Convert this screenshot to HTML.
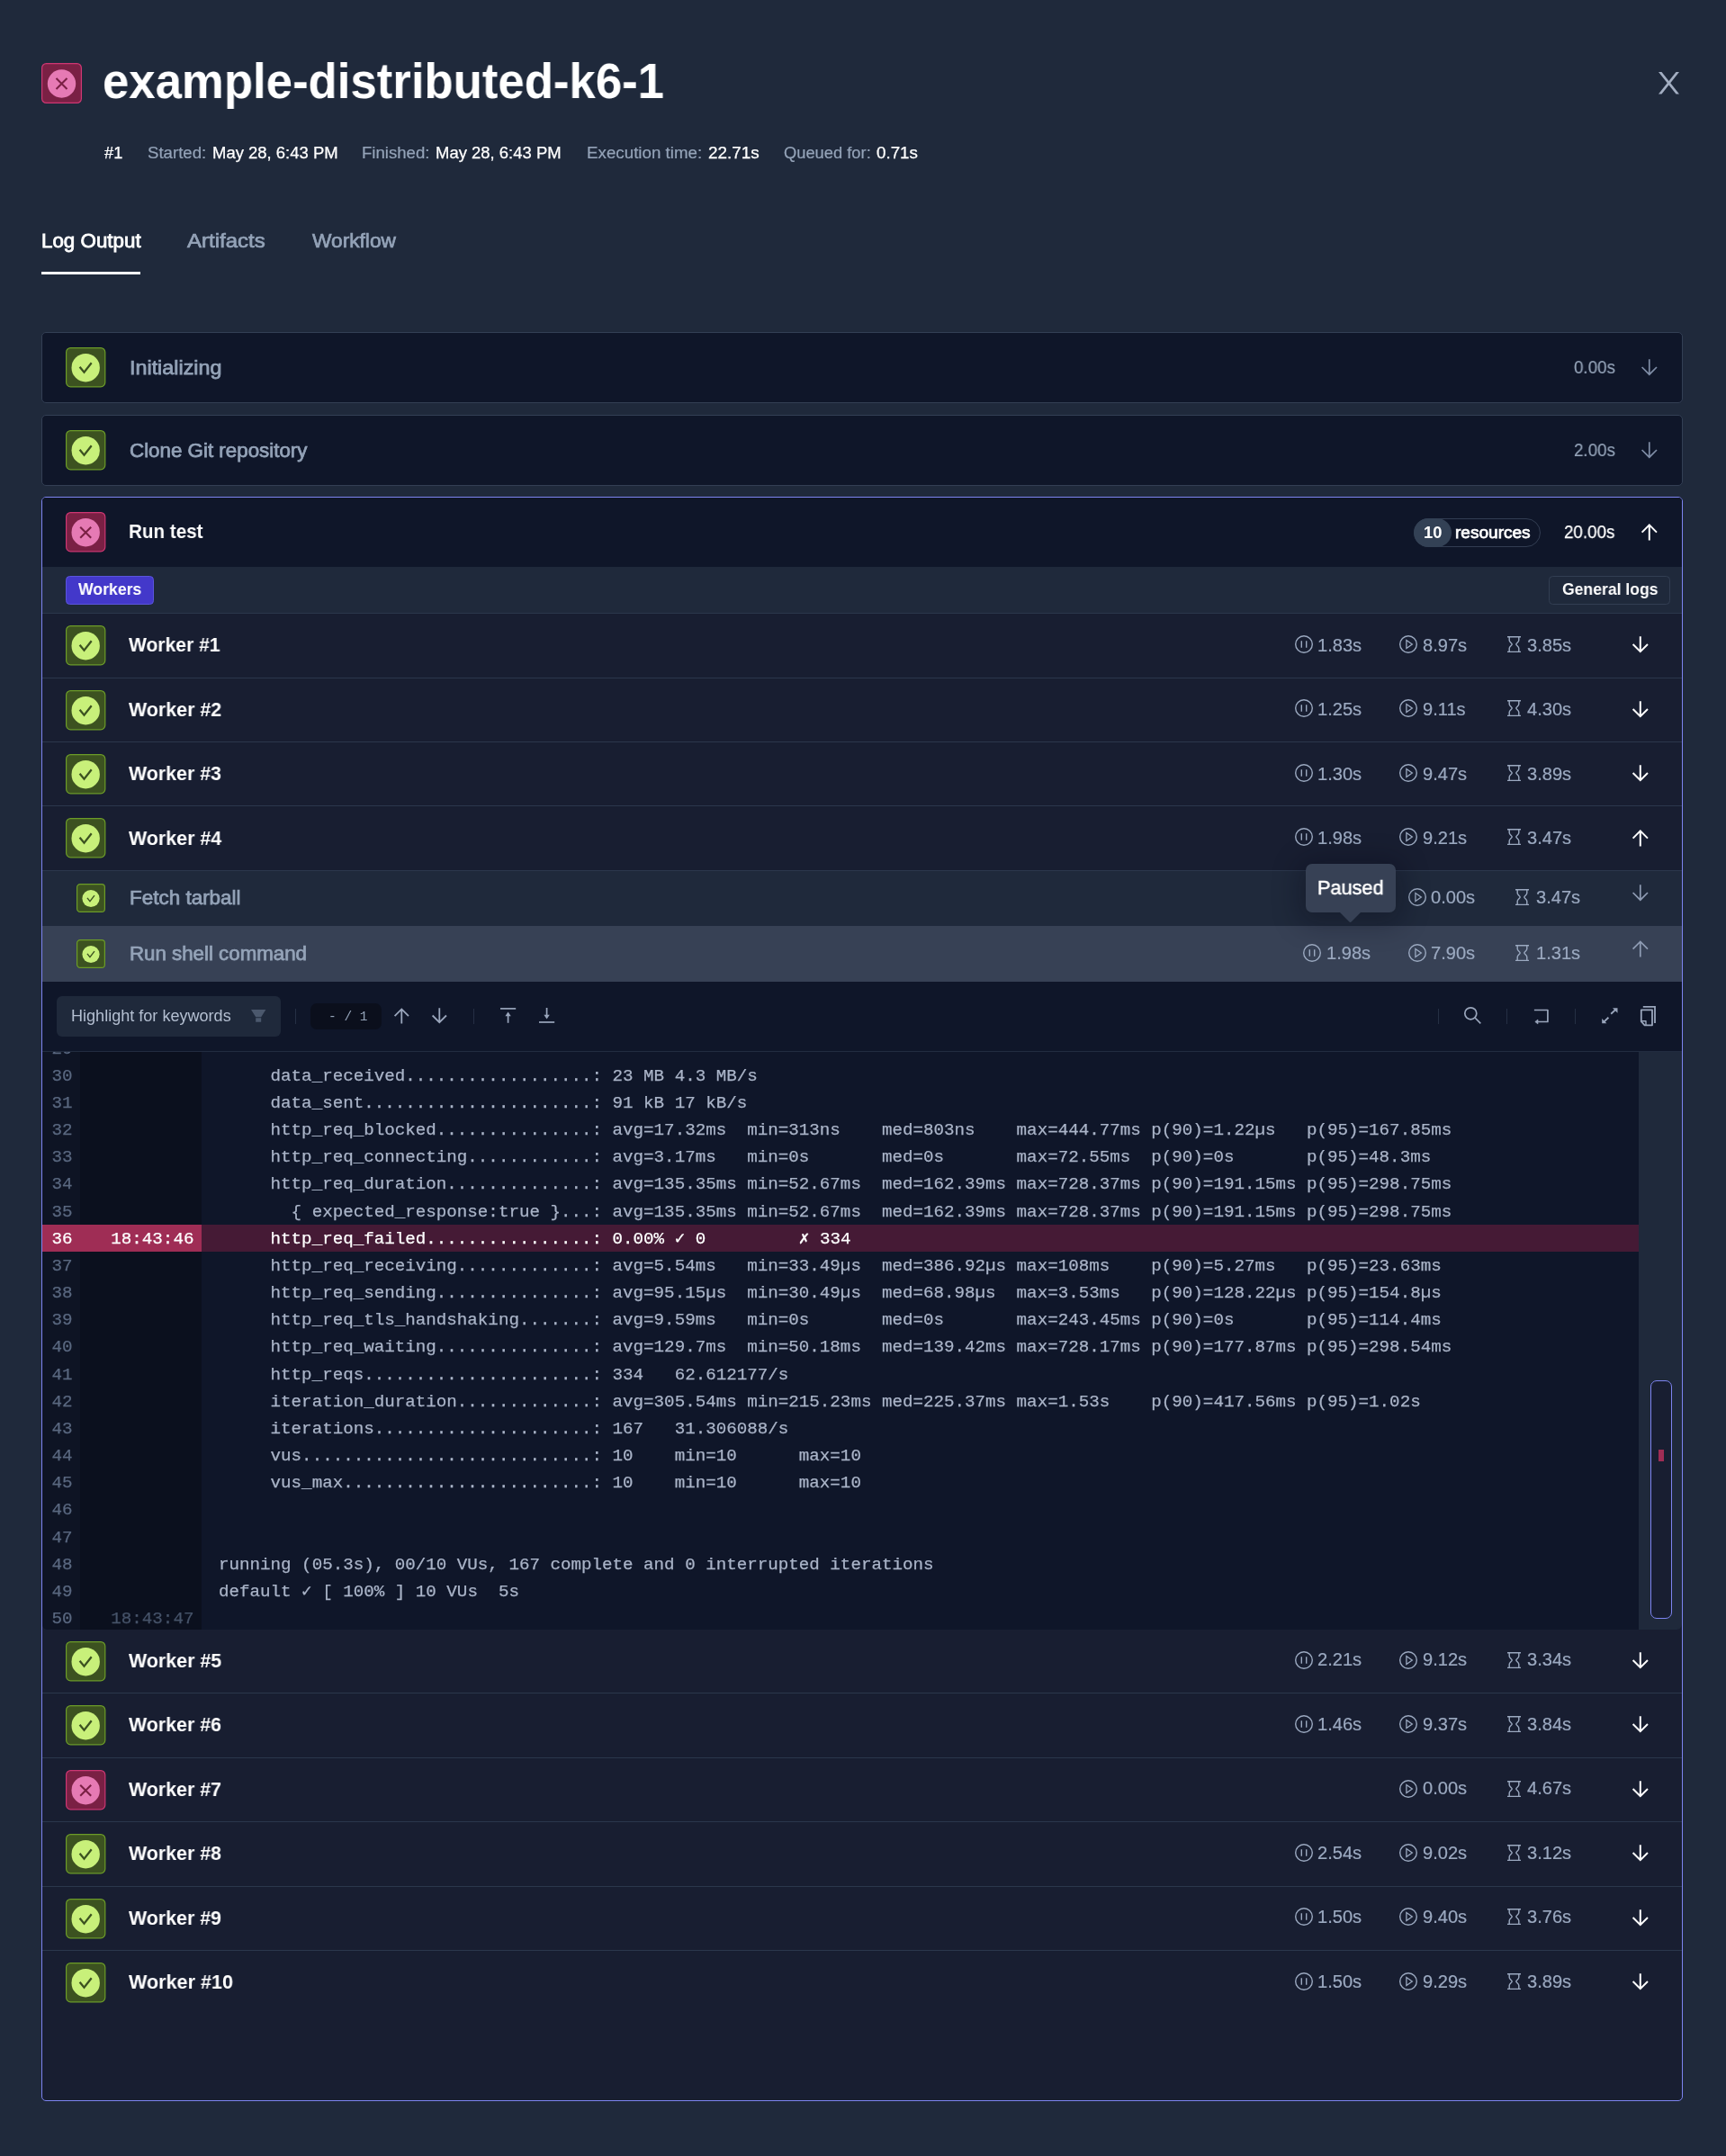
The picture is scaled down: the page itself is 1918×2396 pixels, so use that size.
<!DOCTYPE html>
<html lang="en"><head><meta charset="utf-8"><title>example-distributed-k6-1</title>
<style>
*{box-sizing:border-box;margin:0;padding:0}
html,body{width:1918px;height:2396px;overflow:hidden;background:#1f293b}
body{position:relative;font-family:"Liberation Sans",sans-serif;color:#fff;-webkit-font-smoothing:antialiased}
.abs{position:absolute}
.t{position:absolute;white-space:pre;line-height:30px;height:30px;will-change:transform}
.title{font-weight:700;line-height:64px;height:64px;color:#fff}
.meta{color:#fff;-webkit-text-stroke:0.25px #fff}
.meta.ml{color:#94a3b8;-webkit-text-stroke:0.2px #94a3b8}
.tab{color:#94a3b8;-webkit-text-stroke:0.7px #94a3b8}
.tab.on{color:#fff;-webkit-text-stroke:0.8px #fff}
.card{position:absolute;left:46px;width:1824px;border:1.2px solid #333f54;border-radius:5px;background:#0f1629;overflow:hidden}
.card.act{border-color:#7d84f0}
.step{color:#94a3b8;-webkit-text-stroke:0.75px #94a3b8}
.stepw{font-weight:700;color:#fff}
.dur{color:#94a3b8;-webkit-text-stroke:0.2px #94a3b8}
.durw{color:#fff;-webkit-text-stroke:0.25px #fff}
.stat{color:#9ba9c0;-webkit-text-stroke:0.2px #9ba9c0}
.row{position:absolute;left:47px;width:1822px;background:#181e31}
.sep{position:absolute;left:47px;width:1822px;height:1px;background:#2b374c}
.ico{position:absolute;border-radius:5px;border:1.2px solid}
.ico.ok{background:#3c5220;border-color:#6c9c28}
.ico.bad{background:#7a2044;border-color:#cd3773}
.ico svg{position:absolute;left:0;top:0;width:100%;height:100%;display:block}
svg{display:block;overflow:visible}
.mono{font-family:"Liberation Mono","DejaVu Sans Mono",monospace}
.ln{will-change:transform;position:absolute;left:0;height:30.1px;line-height:30.1px;font-size:19.2px;white-space:pre;color:#aab4c8;-webkit-text-stroke:0.25px}
.num{position:absolute;left:10.6px;color:#5a6880}
.ts{position:absolute;left:76.3px;color:#465369}
.tx{position:absolute;left:196.0px}

.pill10{font-weight:700;color:#fff}
.pillr{color:#fff;-webkit-text-stroke:0.75px #fff}
.tagw{font-weight:700;color:#fff}
.tip{color:#fff;-webkit-text-stroke:0.5px #fff}
.hl{color:#b4bfd1}
.cnt{font-size:14.5px;color:#94a3b8}
</style></head>
<body>
<svg class="abs" style="left:46px;top:69.80px;width:45px;height:45px" viewBox="0 0 45 45"><rect x="0.6" y="0.6" width="43.80" height="43.80" rx="4.86" fill="#7a2044" stroke="#cd3773" stroke-width="1.2"/><circle cx="22.50" cy="23.00" r="15.70" fill="#e67ab4"/><path d="M16.50 17.00 L28.50 29.00 M28.50 17.00 L16.50 29.00" fill="none" stroke="#7a2044" stroke-width="2.10"/></svg>
<div class="t title" style="left:114.40px;top:58.30px;font-size:55.5px;transform-origin:0 50%;transform:scaleX(0.9499);">example-distributed-k6-1</div>
<svg class="abs" style="left:1842.8px;top:79.8px;width:23px;height:24.4px" viewBox="0 0 23 24.4"><path d="M0 0 H3.5 L23 24.4 H19.5 Z" fill="#a3aec2"/><path d="M23 0 H19.5 L0 24.4 H3.5 Z" fill="#a3aec2"/></svg>
<div class="t meta" style="left:115.70px;top:155.10px;font-size:17.78px;transform-origin:0 50%;transform:scaleX(1.0303);">#1</div>
<div class="t meta ml" style="left:163.70px;top:155.10px;font-size:17.78px;transform-origin:0 50%;transform:scaleX(1.0482);">Started:</div>
<div class="t meta" style="left:235.50px;top:155.10px;font-size:17.78px;transform-origin:0 50%;transform:scaleX(1.0394);">May 28, 6:43 PM</div>
<div class="t meta ml" style="left:402.40px;top:155.10px;font-size:17.78px;transform-origin:0 50%;transform:scaleX(1.0457);">Finished:</div>
<div class="t meta" style="left:484.40px;top:155.10px;font-size:17.78px;transform-origin:0 50%;transform:scaleX(1.0394);">May 28, 6:43 PM</div>
<div class="t meta ml" style="left:651.80px;top:155.10px;font-size:17.78px;transform-origin:0 50%;transform:scaleX(1.0559);">Execution time:</div>
<div class="t meta" style="left:786.90px;top:155.10px;font-size:17.78px;transform-origin:0 50%;transform:scaleX(1.0655);">22.71s</div>
<div class="t meta ml" style="left:870.80px;top:155.10px;font-size:17.78px;transform-origin:0 50%;transform:scaleX(1.0309);">Queued for:</div>
<div class="t meta" style="left:974.20px;top:155.10px;font-size:17.78px;transform-origin:0 50%;transform:scaleX(1.0575);">0.71s</div>
<div class="t tab on" style="left:46.20px;top:253.30px;font-size:22.2px;transform-origin:0 50%;transform:scaleX(1.0073);">Log Output</div>
<div class="t tab" style="left:208.30px;top:253.30px;font-size:22.2px;transform-origin:0 50%;transform:scaleX(1.0823);">Artifacts</div>
<div class="t tab" style="left:347.40px;top:253.30px;font-size:22.2px;transform-origin:0 50%;transform:scaleX(1.0231);">Workflow</div>
<div class="abs" style="left:46px;top:301.6px;width:110.3px;height:3.4px;background:#fff"></div>
<div class="card" style="top:369px;height:78.6px"></div>
<svg class="abs" style="left:73px;top:386.20px;width:44.4px;height:44.4px" viewBox="0 0 44.4 44.4"><rect x="0.6" y="0.6" width="43.20" height="43.20" rx="4.80" fill="#3c5220" stroke="#6c9c28" stroke-width="1.2"/><circle cx="22.20" cy="22.70" r="15.70" fill="#c8f07a"/><path d="M15.60 21.70 L20.50 27.80 L28.70 17.20" fill="none" stroke="#3c5220" stroke-width="2.25"/></svg>
<div class="t step" style="left:143.50px;top:393.50px;font-size:22.2px;transform-origin:0 50%;transform:scaleX(1.0513);">Initializing</div>
<div class="t dur" style="left:1749.00px;top:393.20px;font-size:20px;transform-origin:0 50%;transform:scaleX(0.9387);">0.00s</div>
<svg class="abs" style="left:1823.60px;top:398.60px;width:17.6px;height:18.6px" viewBox="0 0 17.6 18.6"><path d="M8.8 0.2 V17.200000000000003 M0.60 9.00 L8.8 17.200000000000003 L17.00 9.00" fill="none" stroke="#7f8da6" stroke-width="1.7"/></svg>
<div class="card" style="top:461px;height:78.6px"></div>
<svg class="abs" style="left:73px;top:478.20px;width:44.4px;height:44.4px" viewBox="0 0 44.4 44.4"><rect x="0.6" y="0.6" width="43.20" height="43.20" rx="4.80" fill="#3c5220" stroke="#6c9c28" stroke-width="1.2"/><circle cx="22.20" cy="22.70" r="15.70" fill="#c8f07a"/><path d="M15.60 21.70 L20.50 27.80 L28.70 17.20" fill="none" stroke="#3c5220" stroke-width="2.25"/></svg>
<div class="t step" style="left:143.50px;top:485.50px;font-size:22.2px;transform-origin:0 50%;transform:scaleX(1.0071);">Clone Git repository</div>
<div class="t dur" style="left:1749.00px;top:485.20px;font-size:20px;transform-origin:0 50%;transform:scaleX(0.9387);">2.00s</div>
<svg class="abs" style="left:1823.60px;top:490.60px;width:17.6px;height:18.6px" viewBox="0 0 17.6 18.6"><path d="M8.8 0.2 V17.200000000000003 M0.60 9.00 L8.8 17.200000000000003 L17.00 9.00" fill="none" stroke="#7f8da6" stroke-width="1.7"/></svg>
<div class="card act" style="top:551.6px;height:1783.2px;background:#181e31"></div>
<div class="abs" style="left:47.2px;top:552.8000000000001px;width:1821.6px;height:76.9px;background:#0f1629;border-radius:4px 4px 0 0"></div>
<svg class="abs" style="left:73px;top:569.20px;width:44.4px;height:44.4px" viewBox="0 0 44.4 44.4"><rect x="0.6" y="0.6" width="43.20" height="43.20" rx="4.80" fill="#7a2044" stroke="#cd3773" stroke-width="1.2"/><circle cx="22.20" cy="22.70" r="15.70" fill="#e67ab4"/><path d="M16.20 16.70 L28.20 28.70 M28.20 16.70 L16.20 28.70" fill="none" stroke="#7a2044" stroke-width="2.10"/></svg>
<div class="t stepw" style="left:143.30px;top:575.70px;font-size:22.2px;transform-origin:0 50%;transform:scaleX(0.9302);">Run test</div>
<div class="abs" style="left:1571px;top:576px;width:141.4px;height:31.8px;border:1.2px solid #323d52;border-radius:16px"></div>
<div class="abs" style="left:1571px;top:576px;width:42px;height:31.8px;background:#334155;border-radius:16px"></div>
<div class="t pill10" style="left:1581.70px;top:576.70px;font-size:18.3px;transform-origin:0 50%;transform:scaleX(1.0049);">10</div>
<div class="t pillr" style="left:1617.40px;top:576.50px;font-size:18.9px;transform-origin:0 50%;transform:scaleX(1.0084);">resources</div>
<div class="t durw" style="left:1738.39px;top:575.60px;font-size:20px;transform-origin:0 50%;transform:scaleX(0.9387);">20.00s</div>
<svg class="abs" style="left:1823.60px;top:581.70px;width:17.6px;height:18.6px" viewBox="0 0 17.6 18.6"><path d="M8.8 18.400000000000002 V1.4 M0.60 9.60 L8.8 1.4 L17.00 9.60" fill="none" stroke="#fff" stroke-width="2.0"/></svg>
<div class="abs" style="left:47.2px;top:629.7px;width:1821.6px;height:51.7px;background:#1f293b"></div>
<div class="abs" style="left:73px;top:640px;width:98px;height:32px;background:#4338ca;border:1.2px solid #5b55dc;border-radius:4.5px"></div>
<div class="t tagw" style="left:86.90px;top:640.30px;font-size:19px;transform-origin:0 50%;transform:scaleX(0.9287);">Workers</div>
<div class="abs" style="left:1721px;top:640px;width:135px;height:32px;border:1.2px solid #323e52;border-radius:4.5px"></div>
<div class="t tagw" style="left:1735.50px;top:640.40px;font-size:19px;transform-origin:0 50%;transform:scaleX(0.9253);">General logs</div>
<div class="sep" style="top:680.9px"></div>
<svg class="abs" style="left:73px;top:695.10px;width:44.4px;height:44.4px" viewBox="0 0 44.4 44.4"><rect x="0.6" y="0.6" width="43.20" height="43.20" rx="4.80" fill="#3c5220" stroke="#6c9c28" stroke-width="1.2"/><circle cx="22.20" cy="22.70" r="15.70" fill="#c8f07a"/><path d="M15.60 21.70 L20.50 27.80 L28.70 17.20" fill="none" stroke="#3c5220" stroke-width="2.25"/></svg>
<div class="t stepw" style="left:142.80px;top:702.20px;font-size:22.2px;transform-origin:0 50%;transform:scaleX(0.9495);">Worker #1</div>
<svg class="abs" style="left:1439.00px;top:705.90px;width:20px;height:20px" viewBox="0 0 20 20"><circle cx="10" cy="10" r="9.3" fill="none" stroke="#9ba9c0" stroke-width="1.4"/><path d="M7.3 6.2 V13.8 M12.7 6.2 V13.8" stroke="#9ba9c0" stroke-width="1.4" fill="none"/></svg>
<div class="t stat" style="left:1464.30px;top:701.60px;font-size:20px;transform-origin:0 50%;transform:scaleX(1.0039);">1.83s</div>
<svg class="abs" style="left:1555.00px;top:705.90px;width:20px;height:20px" viewBox="0 0 20 20"><circle cx="10" cy="10" r="9.3" fill="none" stroke="#9ba9c0" stroke-width="1.4"/><path d="M7.9 5.5 L14.3 10 L7.9 14.5 Z" stroke="#9ba9c0" stroke-width="1.3" fill="none" stroke-linejoin="miter"/></svg>
<div class="t stat" style="left:1580.60px;top:701.60px;font-size:20px;transform-origin:0 50%;transform:scaleX(1.0039);">8.97s</div>
<svg class="abs" style="left:1674.50px;top:706.90px;width:15px;height:18px" viewBox="0 0 15 18"><path d="M0 0.7 H15 M0 17.4 H15" stroke="#9ba9c0" stroke-width="1.4" fill="none"/><path d="M2.2 0.7 V4.6 C2.2 6.6 5.2 7.6 5.2 9 C5.2 10.4 2.2 11.4 2.2 13.4 V17.4 M12.8 0.7 V4.6 C12.8 6.6 9.8 7.6 9.8 9 C9.8 10.4 12.8 11.4 12.8 13.4 V17.4" stroke="#9ba9c0" stroke-width="1.4" fill="none"/></svg>
<div class="t stat" style="left:1697.40px;top:701.60px;font-size:20px;transform-origin:0 50%;transform:scaleX(1.0039);">3.85s</div>
<svg class="abs" style="left:1813.50px;top:707.20px;width:17.6px;height:18.6px" viewBox="0 0 17.6 18.6"><path d="M8.8 0.2 V17.200000000000003 M0.60 9.00 L8.8 17.200000000000003 L17.00 9.00" fill="none" stroke="#fff" stroke-width="2.0"/></svg>
<div class="sep" style="top:753px"></div>
<svg class="abs" style="left:73px;top:766.55px;width:44.4px;height:44.4px" viewBox="0 0 44.4 44.4"><rect x="0.6" y="0.6" width="43.20" height="43.20" rx="4.80" fill="#3c5220" stroke="#6c9c28" stroke-width="1.2"/><circle cx="22.20" cy="22.70" r="15.70" fill="#c8f07a"/><path d="M15.60 21.70 L20.50 27.80 L28.70 17.20" fill="none" stroke="#3c5220" stroke-width="2.25"/></svg>
<div class="t stepw" style="left:142.80px;top:773.65px;font-size:22.2px;transform-origin:0 50%;transform:scaleX(0.9654);">Worker #2</div>
<svg class="abs" style="left:1439.00px;top:777.35px;width:20px;height:20px" viewBox="0 0 20 20"><circle cx="10" cy="10" r="9.3" fill="none" stroke="#9ba9c0" stroke-width="1.4"/><path d="M7.3 6.2 V13.8 M12.7 6.2 V13.8" stroke="#9ba9c0" stroke-width="1.4" fill="none"/></svg>
<div class="t stat" style="left:1464.30px;top:773.05px;font-size:20px;transform-origin:0 50%;transform:scaleX(1.0039);">1.25s</div>
<svg class="abs" style="left:1555.00px;top:777.35px;width:20px;height:20px" viewBox="0 0 20 20"><circle cx="10" cy="10" r="9.3" fill="none" stroke="#9ba9c0" stroke-width="1.4"/><path d="M7.9 5.5 L14.3 10 L7.9 14.5 Z" stroke="#9ba9c0" stroke-width="1.3" fill="none" stroke-linejoin="miter"/></svg>
<div class="t stat" style="left:1580.60px;top:773.05px;font-size:20px;transform-origin:0 50%;transform:scaleX(1.0039);">9.11s</div>
<svg class="abs" style="left:1674.50px;top:778.35px;width:15px;height:18px" viewBox="0 0 15 18"><path d="M0 0.7 H15 M0 17.4 H15" stroke="#9ba9c0" stroke-width="1.4" fill="none"/><path d="M2.2 0.7 V4.6 C2.2 6.6 5.2 7.6 5.2 9 C5.2 10.4 2.2 11.4 2.2 13.4 V17.4 M12.8 0.7 V4.6 C12.8 6.6 9.8 7.6 9.8 9 C9.8 10.4 12.8 11.4 12.8 13.4 V17.4" stroke="#9ba9c0" stroke-width="1.4" fill="none"/></svg>
<div class="t stat" style="left:1697.40px;top:773.05px;font-size:20px;transform-origin:0 50%;transform:scaleX(1.0039);">4.30s</div>
<svg class="abs" style="left:1813.50px;top:778.65px;width:17.6px;height:18.6px" viewBox="0 0 17.6 18.6"><path d="M8.8 0.2 V17.200000000000003 M0.60 9.00 L8.8 17.200000000000003 L17.00 9.00" fill="none" stroke="#fff" stroke-width="2.0"/></svg>
<div class="sep" style="top:824px"></div>
<svg class="abs" style="left:73px;top:838.00px;width:44.4px;height:44.4px" viewBox="0 0 44.4 44.4"><rect x="0.6" y="0.6" width="43.20" height="43.20" rx="4.80" fill="#3c5220" stroke="#6c9c28" stroke-width="1.2"/><circle cx="22.20" cy="22.70" r="15.70" fill="#c8f07a"/><path d="M15.60 21.70 L20.50 27.80 L28.70 17.20" fill="none" stroke="#3c5220" stroke-width="2.25"/></svg>
<div class="t stepw" style="left:142.80px;top:845.10px;font-size:22.2px;transform-origin:0 50%;transform:scaleX(0.9635);">Worker #3</div>
<svg class="abs" style="left:1439.00px;top:848.80px;width:20px;height:20px" viewBox="0 0 20 20"><circle cx="10" cy="10" r="9.3" fill="none" stroke="#9ba9c0" stroke-width="1.4"/><path d="M7.3 6.2 V13.8 M12.7 6.2 V13.8" stroke="#9ba9c0" stroke-width="1.4" fill="none"/></svg>
<div class="t stat" style="left:1464.30px;top:844.50px;font-size:20px;transform-origin:0 50%;transform:scaleX(1.0039);">1.30s</div>
<svg class="abs" style="left:1555.00px;top:848.80px;width:20px;height:20px" viewBox="0 0 20 20"><circle cx="10" cy="10" r="9.3" fill="none" stroke="#9ba9c0" stroke-width="1.4"/><path d="M7.9 5.5 L14.3 10 L7.9 14.5 Z" stroke="#9ba9c0" stroke-width="1.3" fill="none" stroke-linejoin="miter"/></svg>
<div class="t stat" style="left:1580.60px;top:844.50px;font-size:20px;transform-origin:0 50%;transform:scaleX(1.0039);">9.47s</div>
<svg class="abs" style="left:1674.50px;top:849.80px;width:15px;height:18px" viewBox="0 0 15 18"><path d="M0 0.7 H15 M0 17.4 H15" stroke="#9ba9c0" stroke-width="1.4" fill="none"/><path d="M2.2 0.7 V4.6 C2.2 6.6 5.2 7.6 5.2 9 C5.2 10.4 2.2 11.4 2.2 13.4 V17.4 M12.8 0.7 V4.6 C12.8 6.6 9.8 7.6 9.8 9 C9.8 10.4 12.8 11.4 12.8 13.4 V17.4" stroke="#9ba9c0" stroke-width="1.4" fill="none"/></svg>
<div class="t stat" style="left:1697.40px;top:844.50px;font-size:20px;transform-origin:0 50%;transform:scaleX(1.0039);">3.89s</div>
<svg class="abs" style="left:1813.50px;top:850.10px;width:17.6px;height:18.6px" viewBox="0 0 17.6 18.6"><path d="M8.8 0.2 V17.200000000000003 M0.60 9.00 L8.8 17.200000000000003 L17.00 9.00" fill="none" stroke="#fff" stroke-width="2.0"/></svg>
<div class="sep" style="top:895px"></div>
<svg class="abs" style="left:73px;top:909.45px;width:44.4px;height:44.4px" viewBox="0 0 44.4 44.4"><rect x="0.6" y="0.6" width="43.20" height="43.20" rx="4.80" fill="#3c5220" stroke="#6c9c28" stroke-width="1.2"/><circle cx="22.20" cy="22.70" r="15.70" fill="#c8f07a"/><path d="M15.60 21.70 L20.50 27.80 L28.70 17.20" fill="none" stroke="#3c5220" stroke-width="2.25"/></svg>
<div class="t stepw" style="left:142.80px;top:916.55px;font-size:22.2px;transform-origin:0 50%;transform:scaleX(0.9654);">Worker #4</div>
<svg class="abs" style="left:1439.00px;top:920.25px;width:20px;height:20px" viewBox="0 0 20 20"><circle cx="10" cy="10" r="9.3" fill="none" stroke="#9ba9c0" stroke-width="1.4"/><path d="M7.3 6.2 V13.8 M12.7 6.2 V13.8" stroke="#9ba9c0" stroke-width="1.4" fill="none"/></svg>
<div class="t stat" style="left:1464.30px;top:915.95px;font-size:20px;transform-origin:0 50%;transform:scaleX(1.0039);">1.98s</div>
<svg class="abs" style="left:1555.00px;top:920.25px;width:20px;height:20px" viewBox="0 0 20 20"><circle cx="10" cy="10" r="9.3" fill="none" stroke="#9ba9c0" stroke-width="1.4"/><path d="M7.9 5.5 L14.3 10 L7.9 14.5 Z" stroke="#9ba9c0" stroke-width="1.3" fill="none" stroke-linejoin="miter"/></svg>
<div class="t stat" style="left:1580.60px;top:915.95px;font-size:20px;transform-origin:0 50%;transform:scaleX(1.0039);">9.21s</div>
<svg class="abs" style="left:1674.50px;top:921.25px;width:15px;height:18px" viewBox="0 0 15 18"><path d="M0 0.7 H15 M0 17.4 H15" stroke="#9ba9c0" stroke-width="1.4" fill="none"/><path d="M2.2 0.7 V4.6 C2.2 6.6 5.2 7.6 5.2 9 C5.2 10.4 2.2 11.4 2.2 13.4 V17.4 M12.8 0.7 V4.6 C12.8 6.6 9.8 7.6 9.8 9 C9.8 10.4 12.8 11.4 12.8 13.4 V17.4" stroke="#9ba9c0" stroke-width="1.4" fill="none"/></svg>
<div class="t stat" style="left:1697.40px;top:915.95px;font-size:20px;transform-origin:0 50%;transform:scaleX(1.0039);">3.47s</div>
<svg class="abs" style="left:1813.50px;top:921.55px;width:17.6px;height:18.6px" viewBox="0 0 17.6 18.6"><path d="M8.8 18.400000000000002 V1.4 M0.60 9.60 L8.8 1.4 L17.00 9.60" fill="none" stroke="#fff" stroke-width="2.0"/></svg>
<div class="sep" style="top:967px"></div>
<div class="abs" style="left:47.2px;top:967.6px;width:1821.6px;height:61.4px;background:#1f293b"></div>
<div class="abs" style="left:47.2px;top:1029px;width:1821.6px;height:62px;background:#374155"></div>
<svg class="abs" style="left:85px;top:982.20px;width:32px;height:32px" viewBox="0 0 32 32"><rect x="0.6" y="0.6" width="30.80" height="30.80" rx="3.46" fill="#3c5220" stroke="#6c9c28" stroke-width="1.2"/><circle cx="16.00" cy="16.50" r="9.60" fill="#c8f07a"/><path d="M11.96 15.89 L14.96 19.62 L19.97 13.14" fill="none" stroke="#3c5220" stroke-width="1.38"/></svg>
<div class="t step" style="left:143.50px;top:983.00px;font-size:22.2px;transform-origin:0 50%;transform:scaleX(1.0123);">Fetch tarball</div>
<svg class="abs" style="left:1564.60px;top:986.90px;width:20px;height:20px" viewBox="0 0 20 20"><circle cx="10" cy="10" r="9.3" fill="none" stroke="#9ba9c0" stroke-width="1.4"/><path d="M7.9 5.5 L14.3 10 L7.9 14.5 Z" stroke="#9ba9c0" stroke-width="1.3" fill="none" stroke-linejoin="miter"/></svg>
<div class="t stat" style="left:1590.20px;top:982.20px;font-size:20px;transform-origin:0 50%;transform:scaleX(1.0039);">0.00s</div>
<svg class="abs" style="left:1684.10px;top:987.90px;width:15px;height:18px" viewBox="0 0 15 18"><path d="M0 0.7 H15 M0 17.4 H15" stroke="#9ba9c0" stroke-width="1.4" fill="none"/><path d="M2.2 0.7 V4.6 C2.2 6.6 5.2 7.6 5.2 9 C5.2 10.4 2.2 11.4 2.2 13.4 V17.4 M12.8 0.7 V4.6 C12.8 6.6 9.8 7.6 9.8 9 C9.8 10.4 12.8 11.4 12.8 13.4 V17.4" stroke="#9ba9c0" stroke-width="1.4" fill="none"/></svg>
<div class="t stat" style="left:1707.00px;top:982.20px;font-size:20px;transform-origin:0 50%;transform:scaleX(1.0039);">3.47s</div>
<svg class="abs" style="left:1813.50px;top:983.10px;width:17.6px;height:18.6px" viewBox="0 0 17.6 18.6"><path d="M8.8 0.2 V17.200000000000003 M0.60 9.00 L8.8 17.200000000000003 L17.00 9.00" fill="none" stroke="#8f9cb4" stroke-width="1.7"/></svg>
<svg class="abs" style="left:85px;top:1044.20px;width:32px;height:32px" viewBox="0 0 32 32"><rect x="0.6" y="0.6" width="30.80" height="30.80" rx="3.46" fill="#3c5220" stroke="#6c9c28" stroke-width="1.2"/><circle cx="16.00" cy="16.50" r="9.60" fill="#c8f07a"/><path d="M11.96 15.89 L14.96 19.62 L19.97 13.14" fill="none" stroke="#3c5220" stroke-width="1.38"/></svg>
<div class="t step" style="left:143.50px;top:1045.00px;font-size:22.2px;transform-origin:0 50%;transform:scaleX(1.0046);">Run shell command</div>
<svg class="abs" style="left:1447.90px;top:1048.90px;width:20px;height:20px" viewBox="0 0 20 20"><circle cx="10" cy="10" r="9.3" fill="none" stroke="#9ba9c0" stroke-width="1.4"/><path d="M7.3 6.2 V13.8 M12.7 6.2 V13.8" stroke="#9ba9c0" stroke-width="1.4" fill="none"/></svg>
<div class="t stat" style="left:1473.90px;top:1044.20px;font-size:20px;transform-origin:0 50%;transform:scaleX(1.0039);">1.98s</div>
<svg class="abs" style="left:1564.60px;top:1048.90px;width:20px;height:20px" viewBox="0 0 20 20"><circle cx="10" cy="10" r="9.3" fill="none" stroke="#9ba9c0" stroke-width="1.4"/><path d="M7.9 5.5 L14.3 10 L7.9 14.5 Z" stroke="#9ba9c0" stroke-width="1.3" fill="none" stroke-linejoin="miter"/></svg>
<div class="t stat" style="left:1590.20px;top:1044.20px;font-size:20px;transform-origin:0 50%;transform:scaleX(1.0039);">7.90s</div>
<svg class="abs" style="left:1684.10px;top:1049.90px;width:15px;height:18px" viewBox="0 0 15 18"><path d="M0 0.7 H15 M0 17.4 H15" stroke="#9ba9c0" stroke-width="1.4" fill="none"/><path d="M2.2 0.7 V4.6 C2.2 6.6 5.2 7.6 5.2 9 C5.2 10.4 2.2 11.4 2.2 13.4 V17.4 M12.8 0.7 V4.6 C12.8 6.6 9.8 7.6 9.8 9 C9.8 10.4 12.8 11.4 12.8 13.4 V17.4" stroke="#9ba9c0" stroke-width="1.4" fill="none"/></svg>
<div class="t stat" style="left:1707.00px;top:1044.20px;font-size:20px;transform-origin:0 50%;transform:scaleX(1.0039);">1.31s</div>
<svg class="abs" style="left:1813.50px;top:1045.10px;width:17.6px;height:18.6px" viewBox="0 0 17.6 18.6"><path d="M8.8 18.400000000000002 V1.4 M0.60 9.60 L8.8 1.4 L17.00 9.60" fill="none" stroke="#8f9cb4" stroke-width="1.7"/></svg>
<div class="abs" style="left:1451px;top:960px;width:100px;height:53.6px;background:#374155;border-radius:7px;box-shadow:0 5px 30px 8px rgba(5,8,20,.3)"></div>
<svg class="abs" style="left:1487.5px;top:1013px;width:25px;height:12.5px" viewBox="0 0 25 12.5"><path d="M0 0 H25 L13.8 11.3 Q12.5 12.5 11.2 11.3 Z" fill="#374155"/></svg>
<div class="t tip" style="left:1464.00px;top:971.60px;font-size:22.2px;transform-origin:0 50%;transform:scaleX(0.9774);">Paused</div>
<div class="abs" style="left:47.2px;top:1091px;width:1821.6px;height:77.6px;background:#0f1629;border-bottom:1.2px solid #222c40"></div>
<div class="abs" style="left:63px;top:1107px;width:249px;height:45px;background:#1f293b;border-radius:6px"></div>
<div class="t hl" style="left:79.20px;top:1114.20px;font-size:17.78px;transform-origin:0 50%;transform:scaleX(1.0166);">Highlight for keywords</div>
<svg class="abs" style="left:278.5px;top:1122px;width:16.4px;height:13.8px" viewBox="0 0 16.4 13.8"><path d="M0 0 H16.4 L11.2 8.2 H5.2 Z M5.2 9.2 H11.2 V13.8 H5.2 Z" fill="#4b586d"/></svg>
<div class="abs" style="left:328.0px;top:1121px;width:1.2px;height:17px;background:#252f44"></div>
<div class="abs" style="left:345.2px;top:1115px;width:78.8px;height:28.7px;background:#0b0f1c;border-radius:7px"></div>
<div class="t cnt mono" style="left:364.8px;top:1114.60px;">- / 1</div>
<svg class="abs" style="left:437.80px;top:1120.00px;width:16.6px;height:17.6px" viewBox="0 0 16.6 17.6"><path d="M8.3 17.400000000000002 V1.4 M0.60 9.10 L8.3 1.4 L16.00 9.10" fill="none" stroke="#9aa6bc" stroke-width="1.8"/></svg>
<svg class="abs" style="left:480.20px;top:1120.00px;width:16.6px;height:17.6px" viewBox="0 0 16.6 17.6"><path d="M8.3 0.2 V16.200000000000003 M0.60 8.50 L8.3 16.200000000000003 L16.00 8.50" fill="none" stroke="#9aa6bc" stroke-width="1.8"/></svg>
<div class="abs" style="left:525.9px;top:1121px;width:1.2px;height:17px;background:#252f44"></div>
<svg class="abs" style="left:556px;top:1120.4px;width:17.2px;height:17px" viewBox="0 0 17.2 17"><path d="M0 0.9 H17.2" stroke="#9aa6bc" stroke-width="1.7" fill="none"/><path d="M8.6 16.8 V8" stroke="#9aa6bc" stroke-width="1.7" fill="none"/><path d="M5.4 9.3 L8.6 4.6 L11.8 9.3 Z" fill="#9aa6bc"/></svg>
<svg class="abs" style="left:598.9px;top:1120.2px;width:17.2px;height:17px" viewBox="0 0 17.2 17"><path d="M0 16 H17.2" stroke="#9aa6bc" stroke-width="1.7" fill="none"/><path d="M8.6 0 V9" stroke="#9aa6bc" stroke-width="1.7" fill="none"/><path d="M5.4 7.7 L8.6 12.4 L11.8 7.7 Z" fill="#9aa6bc"/></svg>
<div class="abs" style="left:1597.9px;top:1121px;width:1.2px;height:17px;background:#252f44"></div>
<svg class="abs" style="left:1625.8px;top:1118.1px;width:20px;height:20px" viewBox="0 0 20 20"><circle cx="8.3" cy="8.3" r="6.5" fill="none" stroke="#9aa6bc" stroke-width="1.7"/><path d="M13 13 L19.3 19.3" stroke="#9aa6bc" stroke-width="1.7" fill="none"/></svg>
<div class="abs" style="left:1674.0px;top:1121px;width:1.2px;height:17px;background:#252f44"></div>
<svg class="abs" style="left:1703.6px;top:1120.6px;width:18px;height:17.5px" viewBox="0 0 18 17.5"><path d="M0.9 1.5 H15.9 V14.5 H4" stroke="#9aa6bc" stroke-width="1.7" fill="none" stroke-linejoin="round"/><path d="M5 12 L1.8 14.5 L5 17 Z" fill="#9aa6bc" stroke="#9aa6bc" stroke-width="0.6" stroke-linejoin="round"/></svg>
<div class="abs" style="left:1749.9px;top:1121px;width:1.2px;height:17px;background:#252f44"></div>
<svg class="abs" style="left:1780px;top:1120px;width:18px;height:18px" viewBox="0 0 18 18"><path d="M10.2 6.8 L16 1.4 M7.4 10.7 L1.6 16.4" stroke="#9aa6bc" stroke-width="1.9" fill="none"/><path d="M12.0 0.2 H17.5 V5.7 Z M0.2 12.0 V17.2 H5.4 Z" fill="#9aa6bc"/></svg>
<svg class="abs" style="left:1822.3px;top:1117.8px;width:19px;height:23px" viewBox="0 0 19 23"><path d="M3.8 0.9 H17.0 V18.9" stroke="#9aa6bc" stroke-width="1.8" fill="none"/><path d="M1.8 4.3 H14.0 V21.3 H5.6 L1.8 17.2 Z" stroke="#9aa6bc" stroke-width="1.8" fill="none" stroke-linejoin="round"/><path d="M2.2 16.7 H7.0 V21" stroke="#9aa6bc" stroke-width="1.4" fill="none" stroke-linejoin="round"/></svg>
<div class="abs mono" style="left:47.2px;top:1169px;width:1773.8px;height:642.0px;background:#0f1629;overflow:hidden;border-radius:0 0 0 6px">
<div class="abs" style="left:0;top:0;width:41.5px;height:100%;background:#0e1424"></div>
<div class="abs" style="left:41.5px;top:0;width:135.3px;height:100%;background:#0b101e"></div>
<div class="ln" style="top:-18.35px"><span class="num">29</span><span class="ts"></span><span class="tx"></span></div>
<div class="ln" style="top:11.82px"><span class="num">30</span><span class="ts"></span><span class="tx">     data_received..................: 23 MB 4.3 MB/s</span></div>
<div class="ln" style="top:41.98px"><span class="num">31</span><span class="ts"></span><span class="tx">     data_sent......................: 91 kB 17 kB/s</span></div>
<div class="ln" style="top:72.15px"><span class="num">32</span><span class="ts"></span><span class="tx">     http_req_blocked...............: avg=17.32ms  min=313ns    med=803ns    max=444.77ms p(90)=1.22µs   p(95)=167.85ms</span></div>
<div class="ln" style="top:102.31px"><span class="num">33</span><span class="ts"></span><span class="tx">     http_req_connecting............: avg=3.17ms   min=0s       med=0s       max=72.55ms  p(90)=0s       p(95)=48.3ms</span></div>
<div class="ln" style="top:132.48px"><span class="num">34</span><span class="ts"></span><span class="tx">     http_req_duration..............: avg=135.35ms min=52.67ms  med=162.39ms max=728.37ms p(90)=191.15ms p(95)=298.75ms</span></div>
<div class="ln" style="top:162.64px"><span class="num">35</span><span class="ts"></span><span class="tx">       { expected_response:true }...: avg=135.35ms min=52.67ms  med=162.39ms max=728.37ms p(90)=191.15ms p(95)=298.75ms</span></div>
<div class="abs" style="left:0;top:192.21px;width:176.8px;height:29.77px;background:#9f2d55"></div>
<div class="abs" style="left:176.8px;top:192.21px;width:1597px;height:29.77px;background:#451a35"></div>
<div class="ln" style="top:192.81px;color:#fff"><span class="num" style="color:#fff">36</span><span class="ts" style="color:#fff">18:43:46</span><span class="tx">     http_req_failed................: 0.00% ✓ 0         ✗ 334</span></div>
<div class="ln" style="top:222.97px"><span class="num">37</span><span class="ts"></span><span class="tx">     http_req_receiving.............: avg=5.54ms   min=33.49µs  med=386.92µs max=108ms    p(90)=5.27ms   p(95)=23.63ms</span></div>
<div class="ln" style="top:253.14px"><span class="num">38</span><span class="ts"></span><span class="tx">     http_req_sending...............: avg=95.15µs  min=30.49µs  med=68.98µs  max=3.53ms   p(90)=128.22µs p(95)=154.8µs</span></div>
<div class="ln" style="top:283.30px"><span class="num">39</span><span class="ts"></span><span class="tx">     http_req_tls_handshaking.......: avg=9.59ms   min=0s       med=0s       max=243.45ms p(90)=0s       p(95)=114.4ms</span></div>
<div class="ln" style="top:313.47px"><span class="num">40</span><span class="ts"></span><span class="tx">     http_req_waiting...............: avg=129.7ms  min=50.18ms  med=139.42ms max=728.17ms p(90)=177.87ms p(95)=298.54ms</span></div>
<div class="ln" style="top:343.63px"><span class="num">41</span><span class="ts"></span><span class="tx">     http_reqs......................: 334   62.612177/s</span></div>
<div class="ln" style="top:373.80px"><span class="num">42</span><span class="ts"></span><span class="tx">     iteration_duration.............: avg=305.54ms min=215.23ms med=225.37ms max=1.53s    p(90)=417.56ms p(95)=1.02s</span></div>
<div class="ln" style="top:403.96px"><span class="num">43</span><span class="ts"></span><span class="tx">     iterations.....................: 167   31.306088/s</span></div>
<div class="ln" style="top:434.13px"><span class="num">44</span><span class="ts"></span><span class="tx">     vus............................: 10    min=10      max=10</span></div>
<div class="ln" style="top:464.29px"><span class="num">45</span><span class="ts"></span><span class="tx">     vus_max........................: 10    min=10      max=10</span></div>
<div class="ln" style="top:494.46px"><span class="num">46</span><span class="ts"></span><span class="tx"></span></div>
<div class="ln" style="top:524.62px"><span class="num">47</span><span class="ts"></span><span class="tx"></span></div>
<div class="ln" style="top:554.79px"><span class="num">48</span><span class="ts"></span><span class="tx">running (05.3s), 00/10 VUs, 167 complete and 0 interrupted iterations</span></div>
<div class="ln" style="top:584.95px"><span class="num">49</span><span class="ts"></span><span class="tx">default ✓ [ 100% ] 10 VUs  5s</span></div>
<div class="ln" style="top:615.12px"><span class="num">50</span><span class="ts">18:43:47</span><span class="tx"></span></div>
</div>
<div class="abs" style="left:1821px;top:1169px;width:47.8px;height:642.0px;background:#1f293b;border-radius:0 0 6px 0"></div>
<div class="abs" style="left:1834px;top:1534px;width:24px;height:265.4px;background:#181e31;border:1.2px solid #7d84f0;border-radius:7px"></div>
<div class="abs" style="left:1842.8px;top:1611.3px;width:6.2px;height:12.6px;background:#9f2d55"></div>
<svg class="abs" style="left:73px;top:1823.80px;width:44.4px;height:44.4px" viewBox="0 0 44.4 44.4"><rect x="0.6" y="0.6" width="43.20" height="43.20" rx="4.80" fill="#3c5220" stroke="#6c9c28" stroke-width="1.2"/><circle cx="22.20" cy="22.70" r="15.70" fill="#c8f07a"/><path d="M15.60 21.70 L20.50 27.80 L28.70 17.20" fill="none" stroke="#3c5220" stroke-width="2.25"/></svg>
<div class="t stepw" style="left:142.80px;top:1830.90px;font-size:22.2px;transform-origin:0 50%;transform:scaleX(0.9654);">Worker #5</div>
<svg class="abs" style="left:1439.00px;top:1834.60px;width:20px;height:20px" viewBox="0 0 20 20"><circle cx="10" cy="10" r="9.3" fill="none" stroke="#9ba9c0" stroke-width="1.4"/><path d="M7.3 6.2 V13.8 M12.7 6.2 V13.8" stroke="#9ba9c0" stroke-width="1.4" fill="none"/></svg>
<div class="t stat" style="left:1464.30px;top:1829.40px;font-size:20px;transform-origin:0 50%;transform:scaleX(1.0039);">2.21s</div>
<svg class="abs" style="left:1555.00px;top:1834.60px;width:20px;height:20px" viewBox="0 0 20 20"><circle cx="10" cy="10" r="9.3" fill="none" stroke="#9ba9c0" stroke-width="1.4"/><path d="M7.9 5.5 L14.3 10 L7.9 14.5 Z" stroke="#9ba9c0" stroke-width="1.3" fill="none" stroke-linejoin="miter"/></svg>
<div class="t stat" style="left:1580.60px;top:1829.40px;font-size:20px;transform-origin:0 50%;transform:scaleX(1.0039);">9.12s</div>
<svg class="abs" style="left:1674.50px;top:1835.60px;width:15px;height:18px" viewBox="0 0 15 18"><path d="M0 0.7 H15 M0 17.4 H15" stroke="#9ba9c0" stroke-width="1.4" fill="none"/><path d="M2.2 0.7 V4.6 C2.2 6.6 5.2 7.6 5.2 9 C5.2 10.4 2.2 11.4 2.2 13.4 V17.4 M12.8 0.7 V4.6 C12.8 6.6 9.8 7.6 9.8 9 C9.8 10.4 12.8 11.4 12.8 13.4 V17.4" stroke="#9ba9c0" stroke-width="1.4" fill="none"/></svg>
<div class="t stat" style="left:1697.40px;top:1829.40px;font-size:20px;transform-origin:0 50%;transform:scaleX(1.0039);">3.34s</div>
<svg class="abs" style="left:1813.50px;top:1835.90px;width:17.6px;height:18.6px" viewBox="0 0 17.6 18.6"><path d="M8.8 0.2 V17.200000000000003 M0.60 9.00 L8.8 17.200000000000003 L17.00 9.00" fill="none" stroke="#fff" stroke-width="2.0"/></svg>
<div class="sep" style="top:1881px"></div>
<svg class="abs" style="left:73px;top:1895.25px;width:44.4px;height:44.4px" viewBox="0 0 44.4 44.4"><rect x="0.6" y="0.6" width="43.20" height="43.20" rx="4.80" fill="#3c5220" stroke="#6c9c28" stroke-width="1.2"/><circle cx="22.20" cy="22.70" r="15.70" fill="#c8f07a"/><path d="M15.60 21.70 L20.50 27.80 L28.70 17.20" fill="none" stroke="#3c5220" stroke-width="2.25"/></svg>
<div class="t stepw" style="left:142.80px;top:1902.35px;font-size:22.2px;transform-origin:0 50%;transform:scaleX(0.9635);">Worker #6</div>
<svg class="abs" style="left:1439.00px;top:1906.05px;width:20px;height:20px" viewBox="0 0 20 20"><circle cx="10" cy="10" r="9.3" fill="none" stroke="#9ba9c0" stroke-width="1.4"/><path d="M7.3 6.2 V13.8 M12.7 6.2 V13.8" stroke="#9ba9c0" stroke-width="1.4" fill="none"/></svg>
<div class="t stat" style="left:1464.30px;top:1900.85px;font-size:20px;transform-origin:0 50%;transform:scaleX(1.0039);">1.46s</div>
<svg class="abs" style="left:1555.00px;top:1906.05px;width:20px;height:20px" viewBox="0 0 20 20"><circle cx="10" cy="10" r="9.3" fill="none" stroke="#9ba9c0" stroke-width="1.4"/><path d="M7.9 5.5 L14.3 10 L7.9 14.5 Z" stroke="#9ba9c0" stroke-width="1.3" fill="none" stroke-linejoin="miter"/></svg>
<div class="t stat" style="left:1580.60px;top:1900.85px;font-size:20px;transform-origin:0 50%;transform:scaleX(1.0039);">9.37s</div>
<svg class="abs" style="left:1674.50px;top:1907.05px;width:15px;height:18px" viewBox="0 0 15 18"><path d="M0 0.7 H15 M0 17.4 H15" stroke="#9ba9c0" stroke-width="1.4" fill="none"/><path d="M2.2 0.7 V4.6 C2.2 6.6 5.2 7.6 5.2 9 C5.2 10.4 2.2 11.4 2.2 13.4 V17.4 M12.8 0.7 V4.6 C12.8 6.6 9.8 7.6 9.8 9 C9.8 10.4 12.8 11.4 12.8 13.4 V17.4" stroke="#9ba9c0" stroke-width="1.4" fill="none"/></svg>
<div class="t stat" style="left:1697.40px;top:1900.85px;font-size:20px;transform-origin:0 50%;transform:scaleX(1.0039);">3.84s</div>
<svg class="abs" style="left:1813.50px;top:1907.35px;width:17.6px;height:18.6px" viewBox="0 0 17.6 18.6"><path d="M8.8 0.2 V17.200000000000003 M0.60 9.00 L8.8 17.200000000000003 L17.00 9.00" fill="none" stroke="#fff" stroke-width="2.0"/></svg>
<div class="sep" style="top:1953px"></div>
<svg class="abs" style="left:73px;top:1966.70px;width:44.4px;height:44.4px" viewBox="0 0 44.4 44.4"><rect x="0.6" y="0.6" width="43.20" height="43.20" rx="4.80" fill="#7a2044" stroke="#cd3773" stroke-width="1.2"/><circle cx="22.20" cy="22.70" r="15.70" fill="#e67ab4"/><path d="M16.20 16.70 L28.20 28.70 M28.20 16.70 L16.20 28.70" fill="none" stroke="#7a2044" stroke-width="2.10"/></svg>
<div class="t stepw" style="left:142.80px;top:1973.80px;font-size:22.2px;transform-origin:0 50%;transform:scaleX(0.9635);">Worker #7</div>
<svg class="abs" style="left:1555.00px;top:1977.50px;width:20px;height:20px" viewBox="0 0 20 20"><circle cx="10" cy="10" r="9.3" fill="none" stroke="#9ba9c0" stroke-width="1.4"/><path d="M7.9 5.5 L14.3 10 L7.9 14.5 Z" stroke="#9ba9c0" stroke-width="1.3" fill="none" stroke-linejoin="miter"/></svg>
<div class="t stat" style="left:1580.60px;top:1972.30px;font-size:20px;transform-origin:0 50%;transform:scaleX(1.0039);">0.00s</div>
<svg class="abs" style="left:1674.50px;top:1978.50px;width:15px;height:18px" viewBox="0 0 15 18"><path d="M0 0.7 H15 M0 17.4 H15" stroke="#9ba9c0" stroke-width="1.4" fill="none"/><path d="M2.2 0.7 V4.6 C2.2 6.6 5.2 7.6 5.2 9 C5.2 10.4 2.2 11.4 2.2 13.4 V17.4 M12.8 0.7 V4.6 C12.8 6.6 9.8 7.6 9.8 9 C9.8 10.4 12.8 11.4 12.8 13.4 V17.4" stroke="#9ba9c0" stroke-width="1.4" fill="none"/></svg>
<div class="t stat" style="left:1697.40px;top:1972.30px;font-size:20px;transform-origin:0 50%;transform:scaleX(1.0039);">4.67s</div>
<svg class="abs" style="left:1813.50px;top:1978.80px;width:17.6px;height:18.6px" viewBox="0 0 17.6 18.6"><path d="M8.8 0.2 V17.200000000000003 M0.60 9.00 L8.8 17.200000000000003 L17.00 9.00" fill="none" stroke="#fff" stroke-width="2.0"/></svg>
<div class="sep" style="top:2024px"></div>
<svg class="abs" style="left:73px;top:2038.15px;width:44.4px;height:44.4px" viewBox="0 0 44.4 44.4"><rect x="0.6" y="0.6" width="43.20" height="43.20" rx="4.80" fill="#3c5220" stroke="#6c9c28" stroke-width="1.2"/><circle cx="22.20" cy="22.70" r="15.70" fill="#c8f07a"/><path d="M15.60 21.70 L20.50 27.80 L28.70 17.20" fill="none" stroke="#3c5220" stroke-width="2.25"/></svg>
<div class="t stepw" style="left:142.80px;top:2045.25px;font-size:22.2px;transform-origin:0 50%;transform:scaleX(0.9635);">Worker #8</div>
<svg class="abs" style="left:1439.00px;top:2048.95px;width:20px;height:20px" viewBox="0 0 20 20"><circle cx="10" cy="10" r="9.3" fill="none" stroke="#9ba9c0" stroke-width="1.4"/><path d="M7.3 6.2 V13.8 M12.7 6.2 V13.8" stroke="#9ba9c0" stroke-width="1.4" fill="none"/></svg>
<div class="t stat" style="left:1464.30px;top:2043.75px;font-size:20px;transform-origin:0 50%;transform:scaleX(1.0039);">2.54s</div>
<svg class="abs" style="left:1555.00px;top:2048.95px;width:20px;height:20px" viewBox="0 0 20 20"><circle cx="10" cy="10" r="9.3" fill="none" stroke="#9ba9c0" stroke-width="1.4"/><path d="M7.9 5.5 L14.3 10 L7.9 14.5 Z" stroke="#9ba9c0" stroke-width="1.3" fill="none" stroke-linejoin="miter"/></svg>
<div class="t stat" style="left:1580.60px;top:2043.75px;font-size:20px;transform-origin:0 50%;transform:scaleX(1.0039);">9.02s</div>
<svg class="abs" style="left:1674.50px;top:2049.95px;width:15px;height:18px" viewBox="0 0 15 18"><path d="M0 0.7 H15 M0 17.4 H15" stroke="#9ba9c0" stroke-width="1.4" fill="none"/><path d="M2.2 0.7 V4.6 C2.2 6.6 5.2 7.6 5.2 9 C5.2 10.4 2.2 11.4 2.2 13.4 V17.4 M12.8 0.7 V4.6 C12.8 6.6 9.8 7.6 9.8 9 C9.8 10.4 12.8 11.4 12.8 13.4 V17.4" stroke="#9ba9c0" stroke-width="1.4" fill="none"/></svg>
<div class="t stat" style="left:1697.40px;top:2043.75px;font-size:20px;transform-origin:0 50%;transform:scaleX(1.0039);">3.12s</div>
<svg class="abs" style="left:1813.50px;top:2050.25px;width:17.6px;height:18.6px" viewBox="0 0 17.6 18.6"><path d="M8.8 0.2 V17.200000000000003 M0.60 9.00 L8.8 17.200000000000003 L17.00 9.00" fill="none" stroke="#fff" stroke-width="2.0"/></svg>
<div class="sep" style="top:2096px"></div>
<svg class="abs" style="left:73px;top:2109.60px;width:44.4px;height:44.4px" viewBox="0 0 44.4 44.4"><rect x="0.6" y="0.6" width="43.20" height="43.20" rx="4.80" fill="#3c5220" stroke="#6c9c28" stroke-width="1.2"/><circle cx="22.20" cy="22.70" r="15.70" fill="#c8f07a"/><path d="M15.60 21.70 L20.50 27.80 L28.70 17.20" fill="none" stroke="#3c5220" stroke-width="2.25"/></svg>
<div class="t stepw" style="left:142.80px;top:2116.70px;font-size:22.2px;transform-origin:0 50%;transform:scaleX(0.9635);">Worker #9</div>
<svg class="abs" style="left:1439.00px;top:2120.40px;width:20px;height:20px" viewBox="0 0 20 20"><circle cx="10" cy="10" r="9.3" fill="none" stroke="#9ba9c0" stroke-width="1.4"/><path d="M7.3 6.2 V13.8 M12.7 6.2 V13.8" stroke="#9ba9c0" stroke-width="1.4" fill="none"/></svg>
<div class="t stat" style="left:1464.30px;top:2115.20px;font-size:20px;transform-origin:0 50%;transform:scaleX(1.0039);">1.50s</div>
<svg class="abs" style="left:1555.00px;top:2120.40px;width:20px;height:20px" viewBox="0 0 20 20"><circle cx="10" cy="10" r="9.3" fill="none" stroke="#9ba9c0" stroke-width="1.4"/><path d="M7.9 5.5 L14.3 10 L7.9 14.5 Z" stroke="#9ba9c0" stroke-width="1.3" fill="none" stroke-linejoin="miter"/></svg>
<div class="t stat" style="left:1580.60px;top:2115.20px;font-size:20px;transform-origin:0 50%;transform:scaleX(1.0039);">9.40s</div>
<svg class="abs" style="left:1674.50px;top:2121.40px;width:15px;height:18px" viewBox="0 0 15 18"><path d="M0 0.7 H15 M0 17.4 H15" stroke="#9ba9c0" stroke-width="1.4" fill="none"/><path d="M2.2 0.7 V4.6 C2.2 6.6 5.2 7.6 5.2 9 C5.2 10.4 2.2 11.4 2.2 13.4 V17.4 M12.8 0.7 V4.6 C12.8 6.6 9.8 7.6 9.8 9 C9.8 10.4 12.8 11.4 12.8 13.4 V17.4" stroke="#9ba9c0" stroke-width="1.4" fill="none"/></svg>
<div class="t stat" style="left:1697.40px;top:2115.20px;font-size:20px;transform-origin:0 50%;transform:scaleX(1.0039);">3.76s</div>
<svg class="abs" style="left:1813.50px;top:2121.70px;width:17.6px;height:18.6px" viewBox="0 0 17.6 18.6"><path d="M8.8 0.2 V17.200000000000003 M0.60 9.00 L8.8 17.200000000000003 L17.00 9.00" fill="none" stroke="#fff" stroke-width="2.0"/></svg>
<div class="sep" style="top:2167px"></div>
<svg class="abs" style="left:73px;top:2181.05px;width:44.4px;height:44.4px" viewBox="0 0 44.4 44.4"><rect x="0.6" y="0.6" width="43.20" height="43.20" rx="4.80" fill="#3c5220" stroke="#6c9c28" stroke-width="1.2"/><circle cx="22.20" cy="22.70" r="15.70" fill="#c8f07a"/><path d="M15.60 21.70 L20.50 27.80 L28.70 17.20" fill="none" stroke="#3c5220" stroke-width="2.25"/></svg>
<div class="t stepw" style="left:142.80px;top:2188.15px;font-size:22.2px;transform-origin:0 50%;transform:scaleX(0.9723);">Worker #10</div>
<svg class="abs" style="left:1439.00px;top:2191.85px;width:20px;height:20px" viewBox="0 0 20 20"><circle cx="10" cy="10" r="9.3" fill="none" stroke="#9ba9c0" stroke-width="1.4"/><path d="M7.3 6.2 V13.8 M12.7 6.2 V13.8" stroke="#9ba9c0" stroke-width="1.4" fill="none"/></svg>
<div class="t stat" style="left:1464.30px;top:2186.65px;font-size:20px;transform-origin:0 50%;transform:scaleX(1.0039);">1.50s</div>
<svg class="abs" style="left:1555.00px;top:2191.85px;width:20px;height:20px" viewBox="0 0 20 20"><circle cx="10" cy="10" r="9.3" fill="none" stroke="#9ba9c0" stroke-width="1.4"/><path d="M7.9 5.5 L14.3 10 L7.9 14.5 Z" stroke="#9ba9c0" stroke-width="1.3" fill="none" stroke-linejoin="miter"/></svg>
<div class="t stat" style="left:1580.60px;top:2186.65px;font-size:20px;transform-origin:0 50%;transform:scaleX(1.0039);">9.29s</div>
<svg class="abs" style="left:1674.50px;top:2192.85px;width:15px;height:18px" viewBox="0 0 15 18"><path d="M0 0.7 H15 M0 17.4 H15" stroke="#9ba9c0" stroke-width="1.4" fill="none"/><path d="M2.2 0.7 V4.6 C2.2 6.6 5.2 7.6 5.2 9 C5.2 10.4 2.2 11.4 2.2 13.4 V17.4 M12.8 0.7 V4.6 C12.8 6.6 9.8 7.6 9.8 9 C9.8 10.4 12.8 11.4 12.8 13.4 V17.4" stroke="#9ba9c0" stroke-width="1.4" fill="none"/></svg>
<div class="t stat" style="left:1697.40px;top:2186.65px;font-size:20px;transform-origin:0 50%;transform:scaleX(1.0039);">3.89s</div>
<svg class="abs" style="left:1813.50px;top:2193.15px;width:17.6px;height:18.6px" viewBox="0 0 17.6 18.6"><path d="M8.8 0.2 V17.200000000000003 M0.60 9.00 L8.8 17.200000000000003 L17.00 9.00" fill="none" stroke="#fff" stroke-width="2.0"/></svg>
</body></html>
